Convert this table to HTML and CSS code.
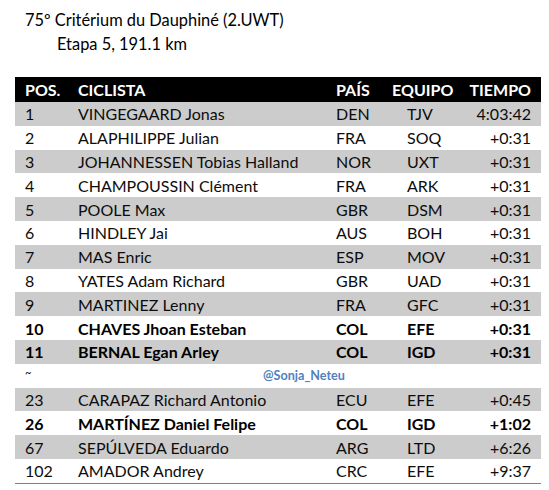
FILE: index.html
```html
<!DOCTYPE html>
<html lang="es">
<head>
  <meta charset="UTF-8">
  <title>Critérium du Dauphiné - Etapa 5</title>
  <link rel="stylesheet" href="styles.css">
</head>
<body>
  <!-- Title -->
  <header class="title">
    <p>75º Critérium du Dauphiné (2.UWT)</p>
    <p class="stage">Etapa 5, 191.1 km</p>
  </header>

  <!-- Results table -->
  <div class="results">
    <div class="row head">
      <span>POS.</span><span>CICLISTA</span><span>PAÍS</span><span class="team">EQUIPO</span><span class="time">TIEMPO</span>
    </div>
    <div class="row">
      <span>1</span><span>VINGEGAARD Jonas</span><span>DEN</span><span class="team">TJV</span><span class="time">4:03:42</span>
    </div>
    <div class="row">
      <span>2</span><span>ALAPHILIPPE Julian</span><span>FRA</span><span class="team">SOQ</span><span class="time">+0:31</span>
    </div>
    <div class="row">
      <span>3</span><span>JOHANNESSEN Tobias Halland</span><span>NOR</span><span class="team">UXT</span><span class="time">+0:31</span>
    </div>
    <div class="row">
      <span>4</span><span>CHAMPOUSSIN Clément</span><span>FRA</span><span class="team">ARK</span><span class="time">+0:31</span>
    </div>
    <div class="row">
      <span>5</span><span>POOLE Max</span><span>GBR</span><span class="team">DSM</span><span class="time">+0:31</span>
    </div>
    <div class="row">
      <span>6</span><span>HINDLEY Jai</span><span>AUS</span><span class="team">BOH</span><span class="time">+0:31</span>
    </div>
    <div class="row">
      <span>7</span><span>MAS Enric</span><span>ESP</span><span class="team">MOV</span><span class="time">+0:31</span>
    </div>
    <div class="row">
      <span>8</span><span>YATES Adam Richard</span><span>GBR</span><span class="team">UAD</span><span class="time">+0:31</span>
    </div>
    <div class="row">
      <span>9</span><span>MARTINEZ Lenny</span><span>FRA</span><span class="team">GFC</span><span class="time">+0:31</span>
    </div>
    <div class="row bold">
      <span>10</span><span>CHAVES Jhoan Esteban</span><span>COL</span><span class="team">EFE</span><span class="time">+0:31</span>
    </div>
    <div class="row bold">
      <span>11</span><span>BERNAL Egan Arley</span><span>COL</span><span class="team">IGD</span><span class="time">+0:31</span>
    </div>
    <div class="row gap">
      <span class="tilde">~</span><span class="credit">@Sonja_Neteu</span>
    </div>
    <div class="row">
      <span>23</span><span>CARAPAZ Richard Antonio</span><span>ECU</span><span class="team">EFE</span><span class="time">+0:45</span>
    </div>
    <div class="row bold">
      <span>26</span><span>MARTÍNEZ Daniel Felipe</span><span>COL</span><span class="team">IGD</span><span class="time">+1:02</span>
    </div>
    <div class="row">
      <span>67</span><span>SEPÚLVEDA Eduardo</span><span>ARG</span><span class="team">LTD</span><span class="time">+6:26</span>
    </div>
    <div class="row">
      <span>102</span><span>AMADOR Andrey</span><span>CRC</span><span class="team">EFE</span><span class="time">+9:37</span>
    </div>
  </div>
</body>
</html>
```

FILE: styles.css
```css
* {
  margin: 0;
  padding: 0;
  box-sizing: border-box;
}

body {
  background-color: #ffffff;
  color: #0d0d0d;
  font-family: Lato, "Open Sans", sans-serif;
  font-size: 16px;
  padding: 8px 8px 0 15px;
}

/* Title */
.title {
  padding-left: 10px;
  font-size: 16.4px;
  line-height: 24px;
  color: #000000;
}

.title .stage {
  padding-left: 32px;
}

/* Results table */
.results {
  width: 526px;
  margin-top: 21px;
  border-bottom: 1px solid #7f7f7f;
}

.row {
  display: grid;
  grid-template-columns: 53px 258px 56px 70px 1fr;
  height: 23.8px;
  align-items: center;
  white-space: nowrap;
}

.row span {
  padding-left: 10px;
}

.row:nth-child(even) {
  background-color: #cccccc;
}

.row .team {
  padding-left: 25px;
}

.row .time {
  text-align: right;
  padding-right: 10px;
}

.row.head {
  height: 25px;
  background-color: #000000;
  color: #ffffff;
  font-weight: bold;
}

.row.head .team {
  padding-left: 10px;
}

.row.bold {
  font-weight: bold;
  color: #000000;
}

/* Separator row with credit */
.row.gap {
  grid-template-columns: 53px 1fr;
}

.tilde {
  font-size: 11px;
  align-self: start;
  padding-top: 2px;
}

.credit {
  color: #4f81bd;
  font-size: 12.6px;
  font-weight: bold;
  padding-left: 195px !important;
}
```
